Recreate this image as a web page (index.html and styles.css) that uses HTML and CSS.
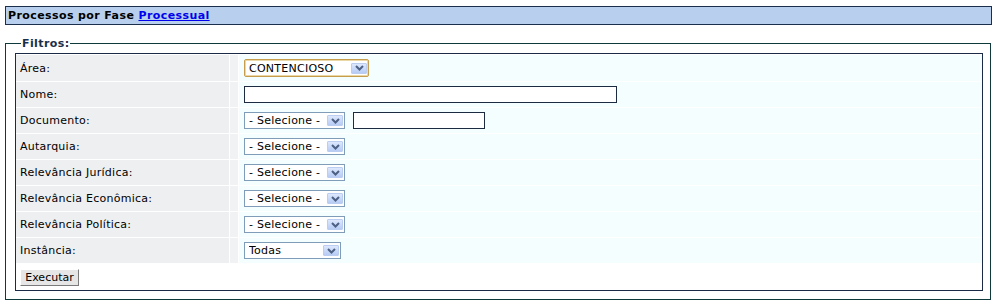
FILE: index.html
```html
<!DOCTYPE html>
<html lang="pt-BR">
<head>
    <meta charset="UTF-8">
    <title>Processos por Fase Processual</title>
    <link rel="stylesheet" href="styles.css">
</head>
<body>
    <div class="page-title">Processos por Fase <a href="#">Processual</a></div>

    <fieldset class="filters">
        <legend>Filtros:</legend>
        <table class="filter-table">
            <tr class="first-row">
                <td class="label">Área:</td>
                <td class="spacer"></td>
                <td class="value">
                    <span class="combo combo-focus" style="width: 125px"><span class="combo-text">CONTENCIOSO</span><span class="combo-btn"><svg width="9" height="6" viewBox="0 0 9 6"><path d="M1 1 L4.5 4.5 L8 1" fill="none" stroke="#4d6185" stroke-width="2"/></svg></span></span>
                </td>
            </tr>
            <tr>
                <td class="label">Nome:</td>
                <td class="spacer"></td>
                <td class="value"><input class="text-input" type="text" style="width: 373px"></td>
            </tr>
            <tr>
                <td class="label">Documento:</td>
                <td class="spacer"></td>
                <td class="value">
                    <span class="combo" style="width: 101px"><span class="combo-text">- Selecione -</span><span class="combo-btn"><svg width="9" height="6" viewBox="0 0 9 6"><path d="M1 1 L4.5 4.5 L8 1" fill="none" stroke="#4d6185" stroke-width="2"/></svg></span></span>
                    <input class="text-input doc-input" type="text" style="width: 132px">
                </td>
            </tr>
            <tr>
                <td class="label">Autarquia:</td>
                <td class="spacer"></td>
                <td class="value">
                    <span class="combo" style="width: 101px"><span class="combo-text">- Selecione -</span><span class="combo-btn"><svg width="9" height="6" viewBox="0 0 9 6"><path d="M1 1 L4.5 4.5 L8 1" fill="none" stroke="#4d6185" stroke-width="2"/></svg></span></span>
                </td>
            </tr>
            <tr>
                <td class="label">Relevância Jurídica:</td>
                <td class="spacer"></td>
                <td class="value">
                    <span class="combo" style="width: 101px"><span class="combo-text">- Selecione -</span><span class="combo-btn"><svg width="9" height="6" viewBox="0 0 9 6"><path d="M1 1 L4.5 4.5 L8 1" fill="none" stroke="#4d6185" stroke-width="2"/></svg></span></span>
                </td>
            </tr>
            <tr>
                <td class="label">Relevância Econômica:</td>
                <td class="spacer"></td>
                <td class="value">
                    <span class="combo" style="width: 101px"><span class="combo-text">- Selecione -</span><span class="combo-btn"><svg width="9" height="6" viewBox="0 0 9 6"><path d="M1 1 L4.5 4.5 L8 1" fill="none" stroke="#4d6185" stroke-width="2"/></svg></span></span>
                </td>
            </tr>
            <tr>
                <td class="label">Relevância Política:</td>
                <td class="spacer"></td>
                <td class="value">
                    <span class="combo" style="width: 101px"><span class="combo-text">- Selecione -</span><span class="combo-btn"><svg width="9" height="6" viewBox="0 0 9 6"><path d="M1 1 L4.5 4.5 L8 1" fill="none" stroke="#4d6185" stroke-width="2"/></svg></span></span>
                </td>
            </tr>
            <tr>
                <td class="label">Instância:</td>
                <td class="spacer"></td>
                <td class="value">
                    <span class="combo" style="width: 97px"><span class="combo-text">Todas</span><span class="combo-btn"><svg width="9" height="6" viewBox="0 0 9 6"><path d="M1 1 L4.5 4.5 L8 1" fill="none" stroke="#4d6185" stroke-width="2"/></svg></span></span>
                </td>
            </tr>
            <tr>
                <td class="actions" colspan="3"><button class="btn" type="button">Executar</button></td>
            </tr>
        </table>
    </fieldset>
</body>
</html>
```

FILE: styles.css
```css
body {
    margin: 0;
    padding: 6px 4px 0 5px;
    font-family: "DejaVu Sans", Verdana, sans-serif;
    font-size: 11px;
    letter-spacing: 0.25px;
    color: #000;
    background-color: #fff;
}
.page-title {
    height: 17px;
    line-height: 17px;
    padding: 0 0 0 2px;
    border: 1px solid #1b2f4c;
    background-color: #b8d0ed;
    font-weight: bold;
    letter-spacing: 0.4px;
    white-space: nowrap;
}
.page-title a {
    color: #0000ee;
    text-decoration: underline;
}
.filters {
    margin: 12px 1px 0 0;
    padding: 3px 7px 8px 9px;
    border: 1px solid #0e3a3c;
}
.filters legend {
    padding: 0 1px;
    margin-left: 6px;
    font-weight: bold;
    letter-spacing: 0.4px;
    color: #1b2f4c;
    line-height: 13px;
}
.filter-table {
    width: 100%;
    border: 1px solid #1b2a46;
    border-collapse: separate;
    border-spacing: 0;
    background-color: #fff;
}
.filter-table td {
    height: 25px;
    padding: 0;
    border-bottom: 1px solid #fff;
    vertical-align: middle;
}
.filter-table .first-row td {
    height: 26px;
    border-top: 1px solid #fff;
}
.filter-table td.label {
    width: 209px;
    padding-left: 4px;
    background-color: #eeeff1;
    border-right: 1px solid #fff;
    white-space: nowrap;
}
.filter-table td.spacer {
    width: 8px;
    background-color: #f1f2f4;
    border-right: 1px solid #fff;
}
.filter-table td.value {
    padding-left: 5px;
    background-color: #f5fefe;
    white-space: nowrap;
}
.filter-table td.actions {
    height: 26px;
    padding-left: 4px;
    border-bottom: none;
    background-color: #fff;
}
.combo {
    display: inline-flex;
    align-items: center;
    box-sizing: border-box;
    height: 17px;
    vertical-align: middle;
    border: 1px solid #7f9db9;
    background-color: #fff;
    padding: 0 1px 0 4px;
}
.combo-focus {
    height: 18px;
    border-color: #c59d4c;
    box-shadow: inset 0 0 0 1px #ecd7a6;
    border-radius: 2px;
}
.combo-text {
    flex: 1;
    overflow: hidden;
    line-height: 15px;
}
.combo-btn {
    display: flex;
    align-items: center;
    justify-content: center;
    width: 16px;
    height: 11px;
    box-sizing: border-box;
    border: 1px solid #bccdf2;
    border-radius: 1px;
    background: linear-gradient(#dde8fd, #b7cbf4);
}
.text-input {
    box-sizing: border-box;
    height: 17px;
    margin: 0;
    padding: 0 2px;
    vertical-align: middle;
    border: 1px solid #1c2b42;
    background-color: #fff;
    font: inherit;
}
.doc-input {
    margin-left: 4px;
}
.btn {
    box-sizing: border-box;
    width: 59px;
    height: 17px;
    margin: 0;
    padding: 0;
    border: 1px solid;
    border-color: #fff #7a7a7a #7a7a7a #fff;
    background-color: #e6e6e6;
    font: inherit;
    color: #000;
    vertical-align: middle;
}
```
